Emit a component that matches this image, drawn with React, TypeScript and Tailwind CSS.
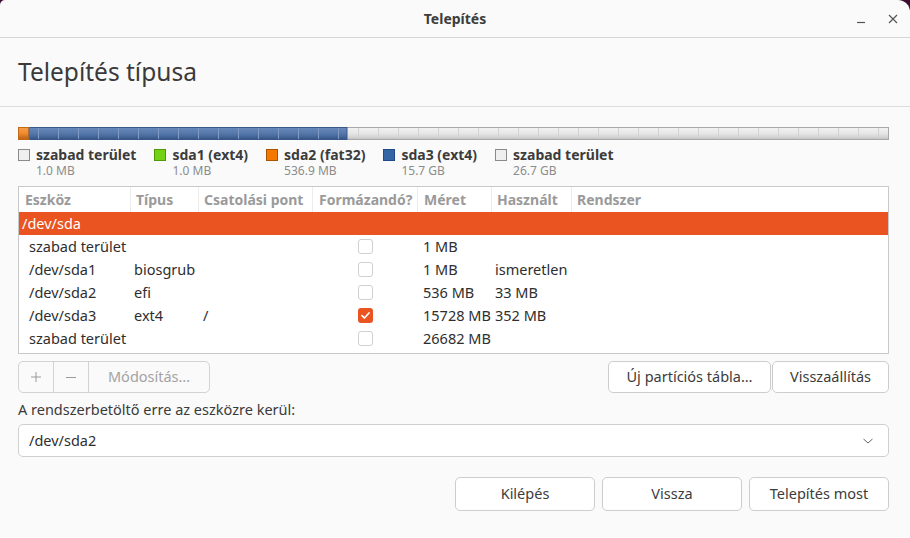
import React from "react";

const font = { fontFamily: '"Noto Sans", "Open Sans", sans-serif' };

function Bar() {
  const W = 871;
  const H = 13;
  const lines: number[] = [];
  for (let x = 20; x < W; x += 20) lines.push(x);
  return (
    <svg width={W} height={H} viewBox={`0 0 ${W} ${H}`} className="block">
      <defs>
        <linearGradient id="gGray" x1="0" y1="0" x2="0" y2="1">
          <stop offset="0" stopColor="#f4f4f4" />
          <stop offset="0.5" stopColor="#e6e6e6" />
          <stop offset="0.85" stopColor="#cfcfcf" />
          <stop offset="1" stopColor="#a8a8a8" />
        </linearGradient>
        <linearGradient id="gBlue" x1="0" y1="0" x2="0" y2="1">
          <stop offset="0" stopColor="#6b8bbb" />
          <stop offset="0.5" stopColor="#5577a9" />
          <stop offset="0.85" stopColor="#3e5f92" />
          <stop offset="1" stopColor="#2c4470" />
        </linearGradient>
        <linearGradient id="gOrange" x1="0" y1="0" x2="0" y2="1">
          <stop offset="0" stopColor="#f6a150" />
          <stop offset="0.5" stopColor="#f08a2a" />
          <stop offset="1" stopColor="#b25c10" />
        </linearGradient>
      </defs>
      <rect x="0" y="0" width={W} height={H} fill="url(#gGray)" />
      <rect x="0" y="0" width="11" height={H} fill="url(#gOrange)" />
      <rect x="11" y="0" width="318" height={H} fill="url(#gBlue)" />
      {lines.map((x) => (
        <line
          key={x}
          x1={x + 0.5}
          y1="1"
          x2={x + 0.5}
          y2={H - 1}
          stroke={x < 329 ? "#7f9ac4" : "#d2d2d2"}
          strokeWidth="1"
        />
      ))}
      <rect x="0.5" y="0.5" width={W - 1} height={H - 1} fill="none" stroke="#a9a9a9" />
      <rect x="11" y="0.5" width="318" height={H - 1} fill="none" stroke="#3a5a8a" />
      <rect x="0.5" y="0.5" width="10.5" height={H - 1} fill="none" stroke="#c06a18" />
    </svg>
  );
}

function Legend({ color, border, name, size }: { color: string; border: string; name: string; size: string }) {
  return (
    <div className="flex gap-[6px]">
      <div className={`w-[12px] h-[12px] mt-[6px] border ${color} ${border}`} />
      <div className="flex flex-col pt-[4px]">
        <span className="text-[14px] font-bold leading-[16px] text-[#3c3c3c]">{name}</span>
        <span className="text-[12px] leading-[14px] mt-[1px] text-[#8c8c8c]">{size}</span>
      </div>
    </div>
  );
}

function Check({ checked }: { checked?: boolean }) {
  if (checked)
    return (
      <div className="w-[15px] h-[15px] rounded-[3px] bg-[#e95420] flex items-center justify-center">
        <svg width="11" height="11" viewBox="0 0 11 11">
          <path d="M2 5.6 L4.4 8 L9 3" fill="none" stroke="#fff" strokeWidth="1.7" strokeLinecap="round" strokeLinejoin="round" />
        </svg>
      </div>
    );
  return <div className="w-[15px] h-[15px] rounded-[3px] border border-[#d0d0d0] bg-white" />;
}

const cols = "grid grid-cols-[112px_68px_114px_105px_74px_80px_1fr]";

const rows = [
  { dev: "szabad terület", type: "", mount: "", checked: false, size: "1 MB", used: "" },
  { dev: "/dev/sda1", type: "biosgrub", mount: "", checked: false, size: "1 MB", used: "ismeretlen" },
  { dev: "/dev/sda2", type: "efi", mount: "", checked: false, size: "536 MB", used: "33 MB" },
  { dev: "/dev/sda3", type: "ext4", mount: "/", checked: true, size: "15728 MB", used: "352 MB" },
  { dev: "szabad terület", type: "", mount: "", checked: false, size: "26682 MB", used: "" },
];

const btn = "h-full flex items-center justify-center border border-[#cdcdcd] rounded-[5px] bg-white text-[14.5px] text-[#3c3c3c]";

export default function App() {
  return (
    <div className="w-[910px] h-[538px] bg-[#3b0f30] overflow-hidden" style={font}>
      <div className="w-full h-full bg-[#fafafa] rounded-tl-[5px] rounded-tr-[12px] flex flex-col">
        {/* title bar */}
        <div className="h-[38px] shrink-0 border-b border-[#d6d6d6] flex items-center relative">
          <div className="flex-1 text-center text-[14px] font-bold text-[#3d3d3d]">Telepítés</div>
          <div className="absolute right-[12px] top-[13px] flex items-center gap-[22px]">
            <svg width="10" height="12" viewBox="0 0 10 12">
              <line x1="1" y1="9.5" x2="9" y2="9.5" stroke="#555" strokeWidth="1.2" />
            </svg>
            <svg width="10" height="12" viewBox="0 0 10 12">
              <path d="M1 2 L9 10 M9 2 L1 10" stroke="#555" strokeWidth="1.2" />
            </svg>
          </div>
        </div>
        {/* header */}
        <div className="h-[69px] shrink-0 border-b border-[#dcdcdc] flex items-center px-[18px]">
          <span className="text-[24.5px] text-[#3a3a3a] leading-none">Telepítés típusa</span>
        </div>
        {/* content */}
        <div className="pl-[18px] pr-[21px] pt-[20px] flex flex-col">
          <Bar />
          <div className="flex gap-[18px] mt-[3px] h-[43px]">
            <Legend color="bg-[#efefef]" border="border-[#8a8a8a]" name="szabad terület" size="1.0 MB" />
            <Legend color="bg-[#73d216]" border="border-[#4e9a06]" name="sda1 (ext4)" size="1.0 MB" />
            <Legend color="bg-[#f57900]" border="border-[#a85400]" name="sda2 (fat32)" size="536.9 MB" />
            <Legend color="bg-[#3465a4]" border="border-[#204a87]" name="sda3 (ext4)" size="15.7 GB" />
            <Legend color="bg-[#efefef]" border="border-[#8a8a8a]" name="szabad terület" size="26.7 GB" />
          </div>
          {/* table */}
          <div className="h-[168px] border border-[#c9c9c9] bg-white flex flex-col">
            <div className={`${cols} h-[25px] text-[14px] font-bold text-[#9a9a9a] items-stretch`}>
              <div className="pl-[6px] flex items-center border-r border-[#ececec]">Eszköz</div>
              <div className="pl-[5px] flex items-center border-r border-[#ececec]">Típus</div>
              <div className="pl-[5px] flex items-center border-r border-[#ececec]">Csatolási pont</div>
              <div className="pl-[6px] flex items-center border-r border-[#ececec]">Formázandó?</div>
              <div className="pl-[6px] flex items-center border-r border-[#ececec]">Méret</div>
              <div className="pl-[5px] flex items-center border-r border-[#ececec]">Használt</div>
              <div className="pl-[5px] flex items-center">Rendszer</div>
            </div>
            <div className="h-[23px] bg-[#e95420] text-white text-[14.5px] flex items-center pl-[3px]">/dev/sda</div>
            {rows.map((r, i) => (
              <div key={i} className={`${cols} h-[23px] text-[14.5px] text-[#2e2e2e] items-center`}>
                <div className="pl-[10px]">{r.dev}</div>
                <div className="pl-[3px]">{r.type}</div>
                <div className="pl-[4px]">{r.mount}</div>
                <div className="flex justify-center">
                  <Check checked={r.checked} />
                </div>
                <div className="pl-[5px]">{r.size}</div>
                <div className="pl-[3px]">{r.used}</div>
                <div />
              </div>
            ))}
          </div>
          {/* buttons row */}
          <div className="flex h-[32px] mt-[7px] items-center">
            <div className="flex h-full border border-[#d3d3d3] rounded-[5px] text-[#a3a3a3] text-[14.5px]">
              <div className="w-[35px] flex items-center justify-center border-r border-[#d3d3d3]">
                <svg width="12" height="12" viewBox="0 0 12 12">
                  <path d="M6 1 V11 M1 6 H11" stroke="#9a9a9a" strokeWidth="1" />
                </svg>
              </div>
              <div className="w-[35px] flex items-center justify-center border-r border-[#d3d3d3]">
                <svg width="12" height="12" viewBox="0 0 12 12">
                  <path d="M1 6.5 H11" stroke="#9a9a9a" strokeWidth="1" />
                </svg>
              </div>
              <div className="w-[120px] flex items-center justify-center">Módosítás…</div>
            </div>
            <div className="flex-1" />
            <div className={`${btn} w-[163px]`}>Új partíciós tábla…</div>
            <div className={`${btn} w-[117px] ml-px`}>Visszaállítás</div>
          </div>
          <div className="mt-[7px] text-[14.5px] text-[#3a3a3a] leading-[18px]">A rendszerbetöltő erre az eszközre kerül:</div>
          <div className="mt-[6px] h-[33px] border border-[#cfcfcf] rounded-[5px] bg-white flex items-center pl-[10px] pr-[14px] text-[14.5px] text-[#2e2e2e]">
            <span className="flex-1">/dev/sda2</span>
            <svg width="12" height="8" viewBox="0 0 12 8">
              <path d="M1.5 2 L6 6 L10.5 2" fill="none" stroke="#666" strokeWidth="1" />
            </svg>
          </div>
          <div className="flex justify-end gap-[7px] mt-[20px] h-[34px]">
            <div className={`${btn} w-[140px]`}>Kilépés</div>
            <div className={`${btn} w-[140px]`}>Vissza</div>
            <div className={`${btn} w-[140px]`}>Telepítés most</div>
          </div>
        </div>
      </div>
    </div>
  );
}
